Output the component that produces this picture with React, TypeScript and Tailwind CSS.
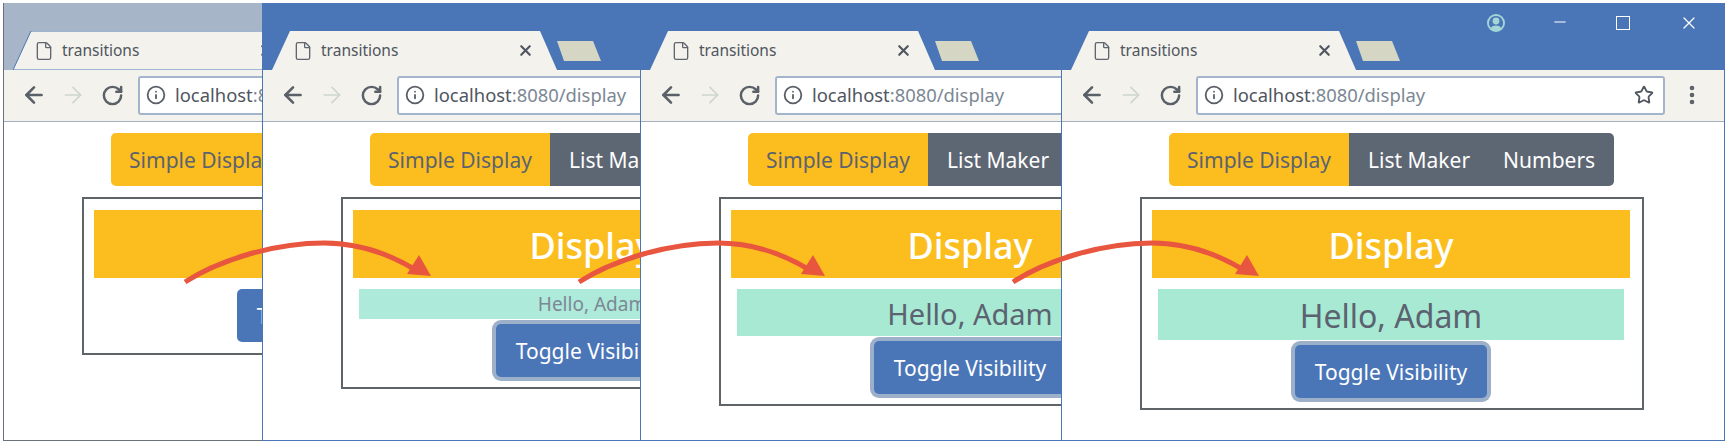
import { ArrowLeft, ArrowRight, File, Info, Minus, MoreVertical, RotateCw, Star, X } from "lucide-react"

const FONT = "font-['Noto_Sans','Open_Sans',sans-serif]"

const WINDOWS = [
  {
    width: "w-[259px]",
    frame: "border-[#6b7178]",
    bar: "bg-[#a6b6c8]",
    tabStroke: "#4a76b8",
    box: "h-[158px]",
    message: null,
    messageClass: "",
    button: "mt-[11px]",
  },
  {
    width: "w-[378px]",
    frame: "border-[#4a76b8]",
    bar: "bg-[#4a76b8]",
    tabStroke: "none",
    box: "h-[192px]",
    message: "text-[19px] text-[#7b8794] h-[30px] leading-[30px]",
    messageClass: "bg-[#aeeada]",
    button: "mt-[5px] ring-4 ring-[#9db0c9]",
  },
  {
    width: "w-[421px]",
    frame: "border-[#4a76b8]",
    bar: "bg-[#4a76b8]",
    tabStroke: "none",
    box: "h-[209px]",
    message: "text-[29px] text-[#5b6270] h-[47px] leading-[49px]",
    messageClass: "bg-[#a8e9d3]",
    button: "mt-[5px] ring-4 ring-[#9db0c9]",
  },
  {
    width: "w-[664px] border-r",
    frame: "border-[#4a76b8]",
    bar: "bg-[#4a76b8]",
    tabStroke: "none",
    box: "h-[213px]",
    message: "text-[32px] text-[#5b6270] h-[51px] leading-[53px]",
    messageClass: "bg-[#a8e9d3]",
    button: "mt-[5px] ring-4 ring-[#9db0c9]",
  },
]

function TitleBar({ bar, tabStroke }: { bar: string; tabStroke: string }) {
  return (
    <div className={`flex h-[67px] items-end pl-[9px] ${bar}`}>
      <div className="relative flex h-[39px] w-[285px] shrink-0 items-center">
        <svg className="absolute inset-0" width="285" height="39" viewBox="0 0 285 39">
          <path d="M0 39 L18 0 H268 L285 39 Z" fill="#f4f2ec" stroke={tabStroke} />
        </svg>
        <File className="relative ml-[21px] h-[20px] w-[20px] text-[#5f6670]" strokeWidth={1.6} />
        <span className="relative ml-[8px] text-[15.5px] text-[#4f5660]">transitions</span>
        <X className="relative ml-[119px] h-[17px] w-[17px] text-[#4f5660]" strokeWidth={3} />
      </div>
      <svg className="mb-[9px] shrink-0" width="44" height="20" viewBox="0 0 44 20">
        <path d="M0 0 H36 L44 20 H7 Z" fill="#d6d6c4" />
      </svg>
      <div className="ml-[86px] flex h-full shrink-0 items-start pt-[10px] text-white">
        <svg width="20" height="20" viewBox="0 0 20 20" fill="#a5d6d6">
          <path d="M10 1a9 9 0 1 0 0 18 9 9 0 0 0 0-18Zm0 2a7 7 0 0 1 5.2 11.7C14 13.3 12 12.6 10 12.6s-4 .7-5.2 2.1A7 7 0 0 1 10 3Z" />
          <circle cx="10" cy="8" r="3.4" />
        </svg>
        <Minus className="ml-[45px] h-[18px] w-[18px]" strokeWidth={1.5} />
        <div className="ml-[47px] mt-[3px] h-[14px] w-[14px] border-[1.5px] border-white" />
        <X className="ml-[49px] h-[20px] w-[20px]" strokeWidth={1.5} />
      </div>
    </div>
  )
}

function Toolbar() {
  return (
    <div className="flex h-[52px] items-center border-b border-[#a3b0c2] bg-[#f4f2ec] pb-[1px] pl-[17px]">
      <ArrowLeft className="h-[26px] w-[26px] text-[#5a6068]" strokeWidth={2.4} />
      <ArrowRight className="ml-[13px] h-[26px] w-[26px] text-[#cdd6cc]" strokeWidth={1.6} />
      <RotateCw className="ml-[15px] h-[23px] w-[23px] text-[#5a6068]" strokeWidth={2.6} />
      <div className="ml-[14px] flex h-[39px] w-[469px] items-center rounded-[3px] border-2 border-[#a3b5cc] bg-white pl-[6px]">
        <Info className="h-[20px] w-[20px] text-[#5a6068]" strokeWidth={2.2} />
        <span className="ml-[9px] text-[18.4px] text-[#4f5660]">
          localhost<span className="text-[#7b8794]">:8080/display</span>
        </span>
        <Star className="ml-auto mr-[9px] h-[20px] w-[20px] text-[#4f5660]" strokeWidth={2.2} />
      </div>
      <MoreVertical className="ml-[15px] h-[24px] w-[24px] text-[#5a6068]" strokeWidth={2.6} />
    </div>
  )
}

function Page({ win }: { win: (typeof WINDOWS)[number] }) {
  return (
    <div className="flex-1">
      <div className="ml-[107px] mt-[11px] flex h-[53px] w-[445px] overflow-hidden rounded-[5px] text-[21px]">
        <div className="flex w-[180px] items-center justify-center bg-[#fbbe1e] pt-[2px] text-[#5b6270]">Simple Display</div>
        <div className="flex flex-1 items-center gap-[33px] bg-[#5d6673] pl-[19px] pt-[2px] text-white">
          <span>List Maker</span>
          <span>Numbers</span>
        </div>
      </div>
      <div className={`ml-[78px] mt-[11px] flex w-[504px] flex-col items-center border-2 border-[#5f6468] pl-[10px] pr-[12px] pt-[11px] ${win.box}`}>
        <div className="flex h-[68px] w-full shrink-0 items-center justify-center bg-[#fbbe1e] pt-[4px] text-[36px] font-medium text-white">
          Display
        </div>
        {win.message && (
          <div className={`mt-[11px] w-[466px] shrink-0 text-center ${win.message} ${win.messageClass}`}>Hello, Adam</div>
        )}
        <button className={`h-[53px] w-[192px] shrink-0 rounded-[5px] bg-[#4a76b8] pt-[2px] text-[21px] text-white ${win.button}`}>
          Toggle Visibility
        </button>
      </div>
    </div>
  )
}

function CurveArrow({ className }: { className: string }) {
  return (
    <svg className={`absolute top-[240px] ${className}`} width="250" height="46" viewBox="0 0 250 46">
      <path d="M1 42 C35 20 90 3 140 3 C172 3 200 11 230 29" fill="none" stroke="#e8563f" strokeWidth="5" />
      <path d="M235 15 L247 36 L223 34 Z" fill="#e8563f" />
    </svg>
  )
}

export default function App() {
  return (
    <div className={`relative flex h-[446px] w-[1725px] overflow-hidden bg-white pl-[3px] pt-[3px] ${FONT}`}>
      {WINDOWS.map((win, i) => (
        <div key={i} className={`h-[438px] shrink-0 overflow-hidden border-b border-l ${win.frame} ${win.width}`}>
          <div className="flex h-full w-[663px] flex-col">
            <TitleBar bar={win.bar} tabStroke={win.tabStroke} />
            <Toolbar />
            <Page win={win} />
          </div>
        </div>
      ))}
      <CurveArrow className="left-[184px]" />
      <CurveArrow className="left-[578px]" />
      <CurveArrow className="left-[1012px]" />
    </div>
  )
}
